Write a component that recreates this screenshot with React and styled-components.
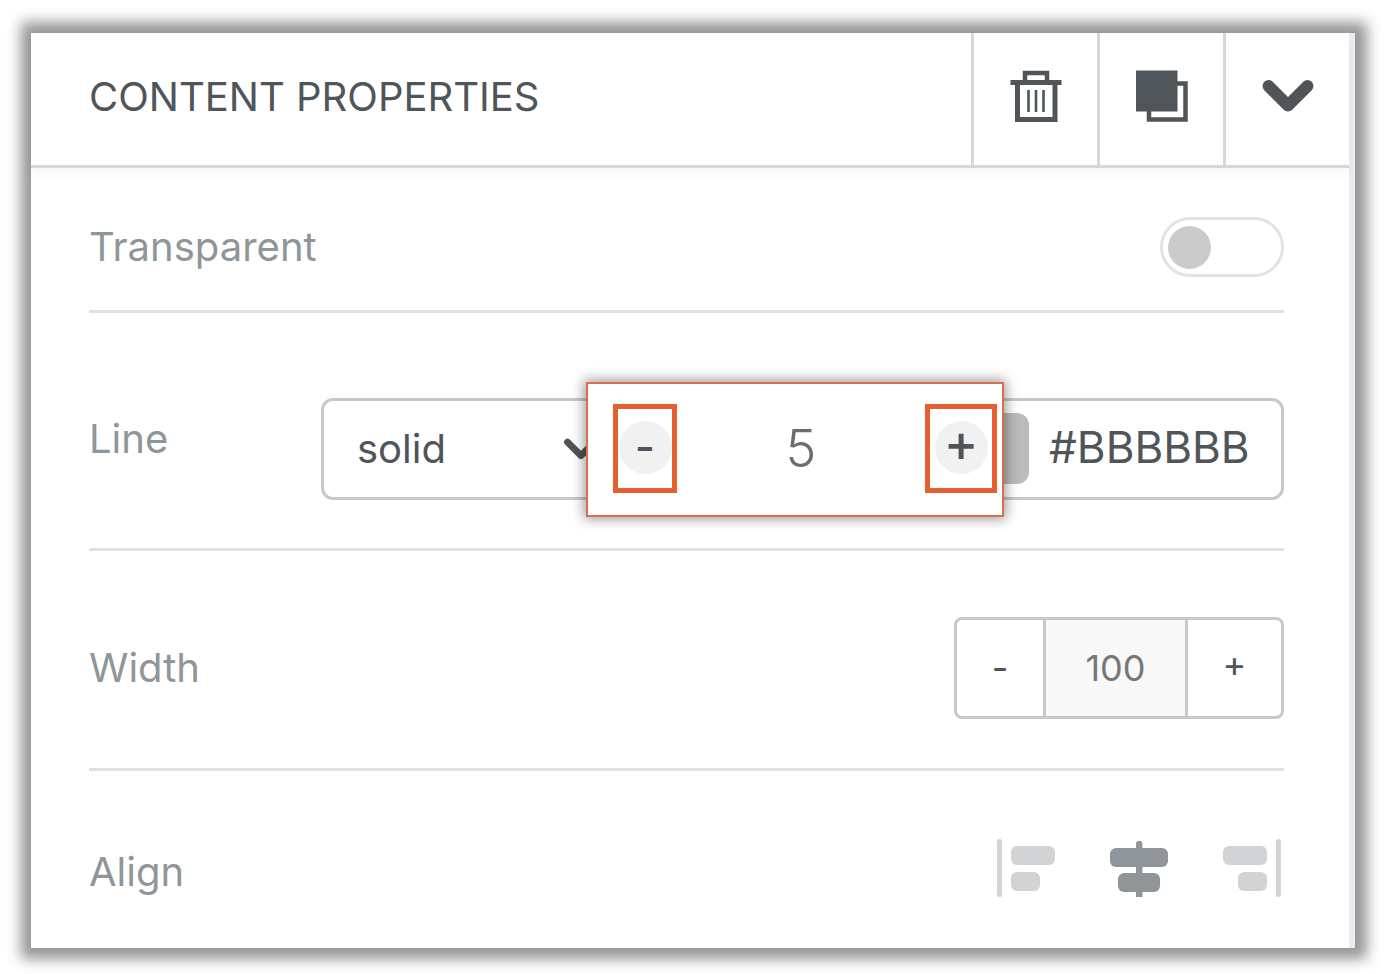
import React, { useState } from "react";
import styled, { createGlobalStyle } from "styled-components";

const GlobalStyle = createGlobalStyle`
  * {
    box-sizing: border-box;
  }
  body {
    margin: 0;
    background: #fff;
    font-family: Inter, "Liberation Sans", sans-serif;
    color: #4f5558;
  }
  button, input, select {
    margin: 0;
    padding: 0;
    border: none;
    border-radius: 0;
    background: none;
    font: inherit;
    color: inherit;
    outline: none;
  }
  button {
    cursor: pointer;
  }
`;

const Page = styled.main`
  display: flex;
  min-height: 100vh;
  padding: 33px 39px 26px 31px;
`;

const Panel = styled.section`
  flex: 1;
  min-width: 0;
  background: #fff;
  border-right: 6px solid #ecebf1;
  box-shadow: 1px 0 13px 11px #969696;
`;

const Header = styled.header`
  display: flex;
  height: 135px;
  border-bottom: 3px solid #d6d6dc;
  box-shadow: 0 6px 12px rgba(0, 0, 0, 0.04);
`;

const Title = styled.h1`
  flex: 1;
  align-self: center;
  margin: 0;
  padding: 0 0 4px 58px;
  font-size: 40px;
  line-height: 48px;
  font-weight: 400;
`;

const HeaderButton = styled.button`
  display: flex;
  align-items: center;
  justify-content: center;
  width: 126px;
  padding-bottom: 6px;
  border-left: 3px solid #d6d6dc;
`;

const Body = styled.div`
  padding: 16px 65px 0 58px;
`;

const Row = styled.div`
  display: flex;
  align-items: center;
  justify-content: space-between;
  height: ${({ height }) => height}px;
  padding-top: ${({ top }) => top || 0}px;
  border-bottom: ${({ last }) => (last ? "none" : "3px solid #e0e0e5")};
`;

const Label = styled.label`
  width: 232px;
  padding-top: ${({ lowered }) => (lowered ? 8 : 0)}px;
  padding-bottom: ${({ raised }) => (raised ? 20 : 0)}px;
  font-size: 40px;
  line-height: 48px;
  color: #8f9699;
`;

const Toggle = styled.input`
  appearance: none;
  display: flex;
  align-items: center;
  width: 124px;
  height: 60px;
  padding: 0 5px;
  border: 3px solid #e2e2e8;
  border-radius: 30px;
  cursor: pointer;
  &::before {
    content: "";
    width: 43px;
    height: 43px;
    border-radius: 50%;
    background: #cbcbcb;
  }
  &:checked {
    justify-content: flex-end;
  }
`;

const LineFields = styled.div`
  position: relative;
  flex: 1;
  display: flex;
  align-items: center;
  justify-content: space-between;
  height: 102px;
  padding: 0 12px 0 33px;
  border: 3px solid #c8c8c8;
  border-radius: 12px;
`;

const SelectBox = styled.div`
  display: flex;
  align-items: center;
  gap: 6px;
`;

const Select = styled.select`
  appearance: none;
  width: 200px;
  height: 60px;
  font-size: 40px;
`;

const ColorBox = styled.div`
  display: flex;
  align-items: center;
  gap: 20px;
`;

const Swatch = styled.button`
  width: 72px;
  height: 71px;
  border-radius: 12px;
  background: #bbb;
`;

const HexInput = styled.input`
  width: 220px;
  height: 60px;
  padding-bottom: 4px;
  font-size: 44px;
`;

const Popup = styled.div`
  position: absolute;
  top: -19px;
  left: 262px;
  right: 277px;
  display: flex;
  align-items: center;
  justify-content: space-between;
  height: 135px;
  padding: 0 5px 2px 25px;
  background: #fff;
  border: 2px solid #d96f4c;
  box-shadow: 0 0 12px 2px rgba(0, 0, 0, 0.4);
`;

const Highlight = styled.div`
  display: flex;
  align-items: center;
  justify-content: center;
  width: ${({ width }) => width}px;
  height: 89px;
  padding-bottom: 2px;
  border: 5px solid #e55f30;
`;

const RoundButton = styled.button`
  flex: none;
  width: 53px;
  height: 53px;
  padding-bottom: ${({ plus }) => (plus ? 8 : 0)}px;
  border-radius: 50%;
  background: #f1f1f1;
  font-size: ${({ plus }) => (plus ? 52 : 44)}px;
  line-height: 44px;
  font-weight: 500;
`;

const SizeInput = styled.input`
  width: 140px;
  height: 60px;
  font-size: 52px;
  font-weight: 300;
  text-align: center;
  color: #6c6c6c;
`;

const Stepper = styled.div`
  display: grid;
  grid-template-columns: 86px 145px 93px;
  height: 102px;
  border: 3px solid #c8c8c8;
  border-radius: 8px;
`;

const StepButton = styled.button`
  padding-bottom: ${({ plus }) => (plus ? 8 : 0)}px;
  font-size: 36px;
`;

const StepInput = styled.input`
  min-width: 0;
  border: solid #c8c8c8;
  border-width: 0 3px;
  background: #f8f8f8;
  font-size: 36px;
  text-align: center;
  color: #777;
`;

const AlignGroup = styled.div`
  display: flex;
  align-items: center;
  gap: 55px;
  padding-right: 3px;
`;

const AlignButton = styled.button`
  display: flex;
  color: ${({ active }) => (active ? "#8f9598" : "#d2d3d5")};
`;

const TrashIcon = () => (
  <svg width="52" height="52" viewBox="0 0 52 52" fill="none" stroke="currentColor">
    <path d="M15 11V3H37V11" strokeWidth="4.5" />
    <path d="M0.500 12.500H51.500" strokeWidth="5" />
    <path d="M7.500 13V49.500H45V13" strokeWidth="5" />
    <path d="M18.500 20V42M26 20V42M33.500 20V42" strokeWidth="2.600" />
  </svg>
);

const CopyIcon = () => (
  <svg width="52" height="52" viewBox="0 0 52 52" fill="none">
    <path d="M41 13.500H49.500V49.500H13V40" stroke="currentColor" strokeWidth="4.500" />
    <path d="M0 0.500H41.500V41.500H0Z" fill="currentColor" />
  </svg>
);

const ChevronIcon = ({ width, height, stroke }) => (
  <svg width={width} height={height} viewBox="0 0 52 34" fill="none">
    <path
      d="M6.500 7L26 26.500L45.500 7"
      stroke="currentColor"
      strokeWidth={stroke}
      strokeLinecap="round"
      strokeLinejoin="round"
    />
  </svg>
);

const AlignLeftIcon = () => (
  <svg width="58" height="58" viewBox="0 0 58 58" fill="currentColor">
    <rect x="0" y="0" width="5" height="58" rx="2.500" />
    <rect x="14" y="7" width="44" height="19" rx="6" />
    <rect x="14" y="33" width="29" height="19" rx="6" />
  </svg>
);

const AlignCenterIcon = () => (
  <svg width="58" height="58" viewBox="0 0 58 58" fill="currentColor">
    <path d="M26 58V5a3.200 3.200 0 0 1 6.400 0V58Z" />
    <rect x="0" y="9" width="58" height="19" rx="6" />
    <rect x="8" y="34" width="42" height="19" rx="6" />
  </svg>
);

const AlignRightIcon = () => (
  <svg width="58" height="58" viewBox="0 0 58 58" fill="currentColor">
    <rect x="53" y="0" width="5" height="58" rx="2.500" />
    <rect x="0" y="7" width="44" height="19" rx="6" />
    <rect x="15" y="33" width="29" height="19" rx="6" />
  </svg>
);

const alignments = [
  { name: "left", Icon: AlignLeftIcon },
  { name: "center", Icon: AlignCenterIcon },
  { name: "right", Icon: AlignRightIcon },
];

function App() {
  const [transparent, setTransparent] = useState(false);
  const [lineStyle, setLineStyle] = useState("solid");
  const [size, setSize] = useState(5);
  const [color, setColor] = useState("#BBBBBB");
  const [width, setWidth] = useState(100);
  const [align, setAlign] = useState("center");

  return (
    <Page>
      <GlobalStyle />
      <Panel>
        <Header>
          <Title>CONTENT PROPERTIES</Title>
          <HeaderButton aria-label="Delete">
            <TrashIcon />
          </HeaderButton>
          <HeaderButton aria-label="Duplicate">
            <CopyIcon />
          </HeaderButton>
          <HeaderButton aria-label="Collapse">
            <ChevronIcon width={52} height={34} stroke={12} />
          </HeaderButton>
        </Header>
        <Body>
          <Row height={129}>
            <Label htmlFor="transparent">Transparent</Label>
            <Toggle
              id="transparent"
              type="checkbox"
              checked={transparent}
              onChange={(e) => setTransparent(e.target.checked)}
            />
          </Row>
          <Row height={238} top={36}>
            <Label htmlFor="line" raised={1}>
              Line
            </Label>
            <LineFields>
              <SelectBox>
                <Select
                  id="line"
                  value={lineStyle}
                  onChange={(e) => setLineStyle(e.target.value)}
                >
                  <option>solid</option>
                  <option>dashed</option>
                  <option>dotted</option>
                </Select>
                <ChevronIcon width={36} height={24} stroke={10} />
              </SelectBox>
              <ColorBox>
                <Swatch aria-label="Pick color" />
                <HexInput
                  aria-label="Line color"
                  value={color}
                  onChange={(e) => setColor(e.target.value)}
                />
              </ColorBox>
              <Popup>
                <Highlight width={64}>
                  <RoundButton onClick={() => setSize(size - 1)}>-</RoundButton>
                </Highlight>
                <SizeInput
                  aria-label="Line size"
                  value={size}
                  onChange={(e) => setSize(Number(e.target.value))}
                />
                <Highlight width={72}>
                  <RoundButton plus={1} onClick={() => setSize(size + 1)}>
                    +
                  </RoundButton>
                </Highlight>
              </Popup>
            </LineFields>
          </Row>
          <Row height={220} top={16}>
            <Label htmlFor="width">Width</Label>
            <Stepper>
              <StepButton onClick={() => setWidth(width - 1)}>-</StepButton>
              <StepInput
                id="width"
                value={width}
                onChange={(e) => setWidth(Number(e.target.value))}
              />
              <StepButton plus={1} onClick={() => setWidth(width + 1)}>
                +
              </StepButton>
            </Stepper>
          </Row>
          <Row height={177} top={16} last={1}>
            <Label as="span" lowered={1}>
              Align
            </Label>
            <AlignGroup role="group" aria-label="Align">
              {alignments.map(({ name, Icon }) => (
                <AlignButton
                  key={name}
                  aria-label={name}
                  active={align === name ? 1 : 0}
                  onClick={() => setAlign(name)}
                >
                  <Icon />
                </AlignButton>
              ))}
            </AlignGroup>
          </Row>
        </Body>
      </Panel>
    </Page>
  );
}

export default App;
